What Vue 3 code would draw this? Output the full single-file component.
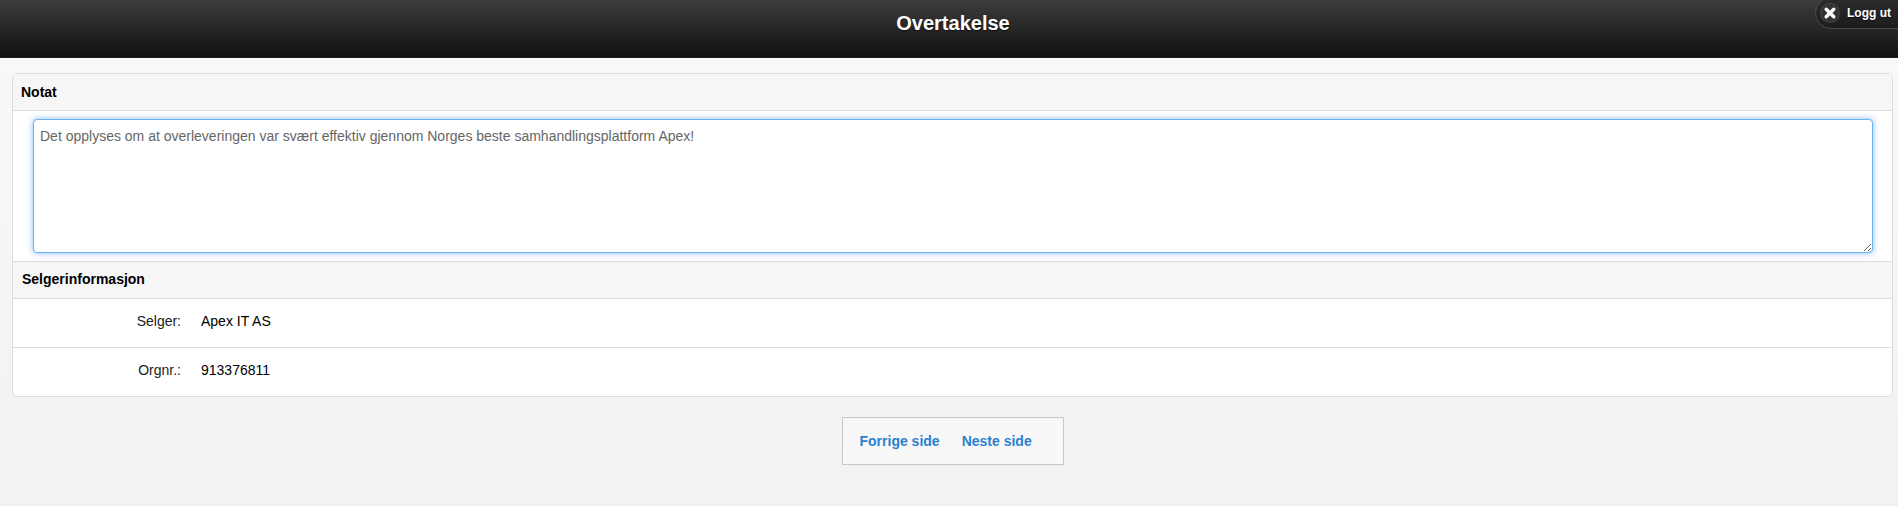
<script setup>
const note = 'Det opplyses om at overleveringen var svært effektiv gjennom Norges beste samhandlingsplattform Apex!'
const seller = [
  { label: 'Selger:', value: 'Apex IT AS' },
  { label: 'Orgnr.:', value: '913376811' },
]
</script>

<template>
  <div class="page">
    <header class="header">
      <h1>Overtakelse</h1>
      <a class="logout">
        <span class="logout-icon">
          <svg viewBox="0 0 14 14" width="14" height="14"><path d="M3.2 3.2l7.6 7.6M10.8 3.2l-7.6 7.6" stroke="#fff" stroke-width="3.4" stroke-linecap="round" fill="none"/></svg>
        </span>
        <span>Logg ut</span>
      </a>
    </header>
    <main class="content">
      <section class="panel">
        <div class="divider first">Notat</div>
        <div class="note">
          <textarea :value="note"></textarea>
        </div>
        <div class="divider second">Selgerinformasjon</div>
        <div v-for="row in seller" :key="row.label" class="row">
          <span class="label">{{ row.label }}</span>
          <span>{{ row.value }}</span>
        </div>
      </section>
      <nav class="pager">
        <a>Forrige side</a>
        <a>Neste side</a>
      </nav>
    </main>
  </div>
</template>

<style>
html, body { margin: 0; background: #f2f2f2; }
</style>

<style scoped>
.page {
  min-height: 506px;
  background: linear-gradient(#f9f9f9, #f2f2f2);
  font-family: "Liberation Sans", Arial, sans-serif;
  font-size: 14px;
  color: #000;
  overflow: hidden;
}
.header {
  position: relative;
  height: 57px;
  border-bottom: 1px solid #222;
  background: linear-gradient(#3c3c3c, #111);
  display: flex;
  align-items: flex-start;
  justify-content: center;
}
.header h1 {
  margin: 12px 0 0 8px;
  font-size: 20px;
  line-height: 23px;
  font-weight: 700;
  color: #fff;
  text-shadow: 0 1px 1px #111;
}
.logout {
  position: absolute;
  top: -3px;
  left: 1815px;
  height: 30px;
  width: 96px;
  padding-left: 5px;
  border: 1px solid #4a4a4a;
  border-radius: 16px;
  background: linear-gradient(#2c2c2c, #1c1c1c);
  display: flex;
  align-items: center;
  gap: 8px;
  color: #fff;
  font-size: 12px;
  font-weight: 700;
  text-shadow: 0 1px 1px #111;
}
.logout-icon {
  width: 18px;
  height: 18px;
  border-radius: 50%;
  background: #333;
  box-shadow: 0 0 0 1px #444;
  display: flex;
  align-items: center;
  justify-content: center;
}
.content { padding: 15px 5px 0 12px; }
.panel {
  border: 1px solid #ddd;
  border-radius: 5px;
  background: #fff;
  overflow: hidden;
}
.divider {
  height: 36px;
  line-height: 36px;
  background: #f6f6f6;
  border-bottom: 1px solid #ddd;
  font-size: 14px;
  font-weight: 700;
}
.divider.first { padding-left: 8px; }
.divider.second { border-top: 1px solid #ddd; padding-left: 9px; line-height: 35px; }
.note { padding: 8px 19px 8px 20px; }
textarea {
  display: block;
  box-sizing: border-box;
  width: 100%;
  height: 134px;
  padding: 7px 6px 6px;
  border: 1px solid #6cb4f0;
  border-radius: 4px;
  outline: none;
  box-shadow: 0 0 6px rgba(56, 142, 240, 0.6);
  font-family: "Liberation Sans", Arial, sans-serif;
  font-size: 14px;
  line-height: 18px;
  color: #666;
  background: #fff;
}
.row {
  height: 48px;
  padding-bottom: 4px;
  box-sizing: border-box;
  display: flex;
  align-items: center;
  font-size: 14px;
}
.row + .row { border-top: 1px solid #ddd; height: 49px; }
.label {
  width: 168px;
  margin-right: 20px;
  text-align: right;
  color: #222;
}
.pager {
  box-sizing: border-box;
  width: 222px;
  height: 48px;
  margin: 20px auto 0;
  border: 1px solid #c8c8c8;
  background: #f8f8f8;
  display: flex;
  align-items: center;
  gap: 22px;
  padding-left: 17px;
}
.pager a {
  color: #2a7fd1;
  font-size: 14px;
  font-weight: 700;
}
</style>
